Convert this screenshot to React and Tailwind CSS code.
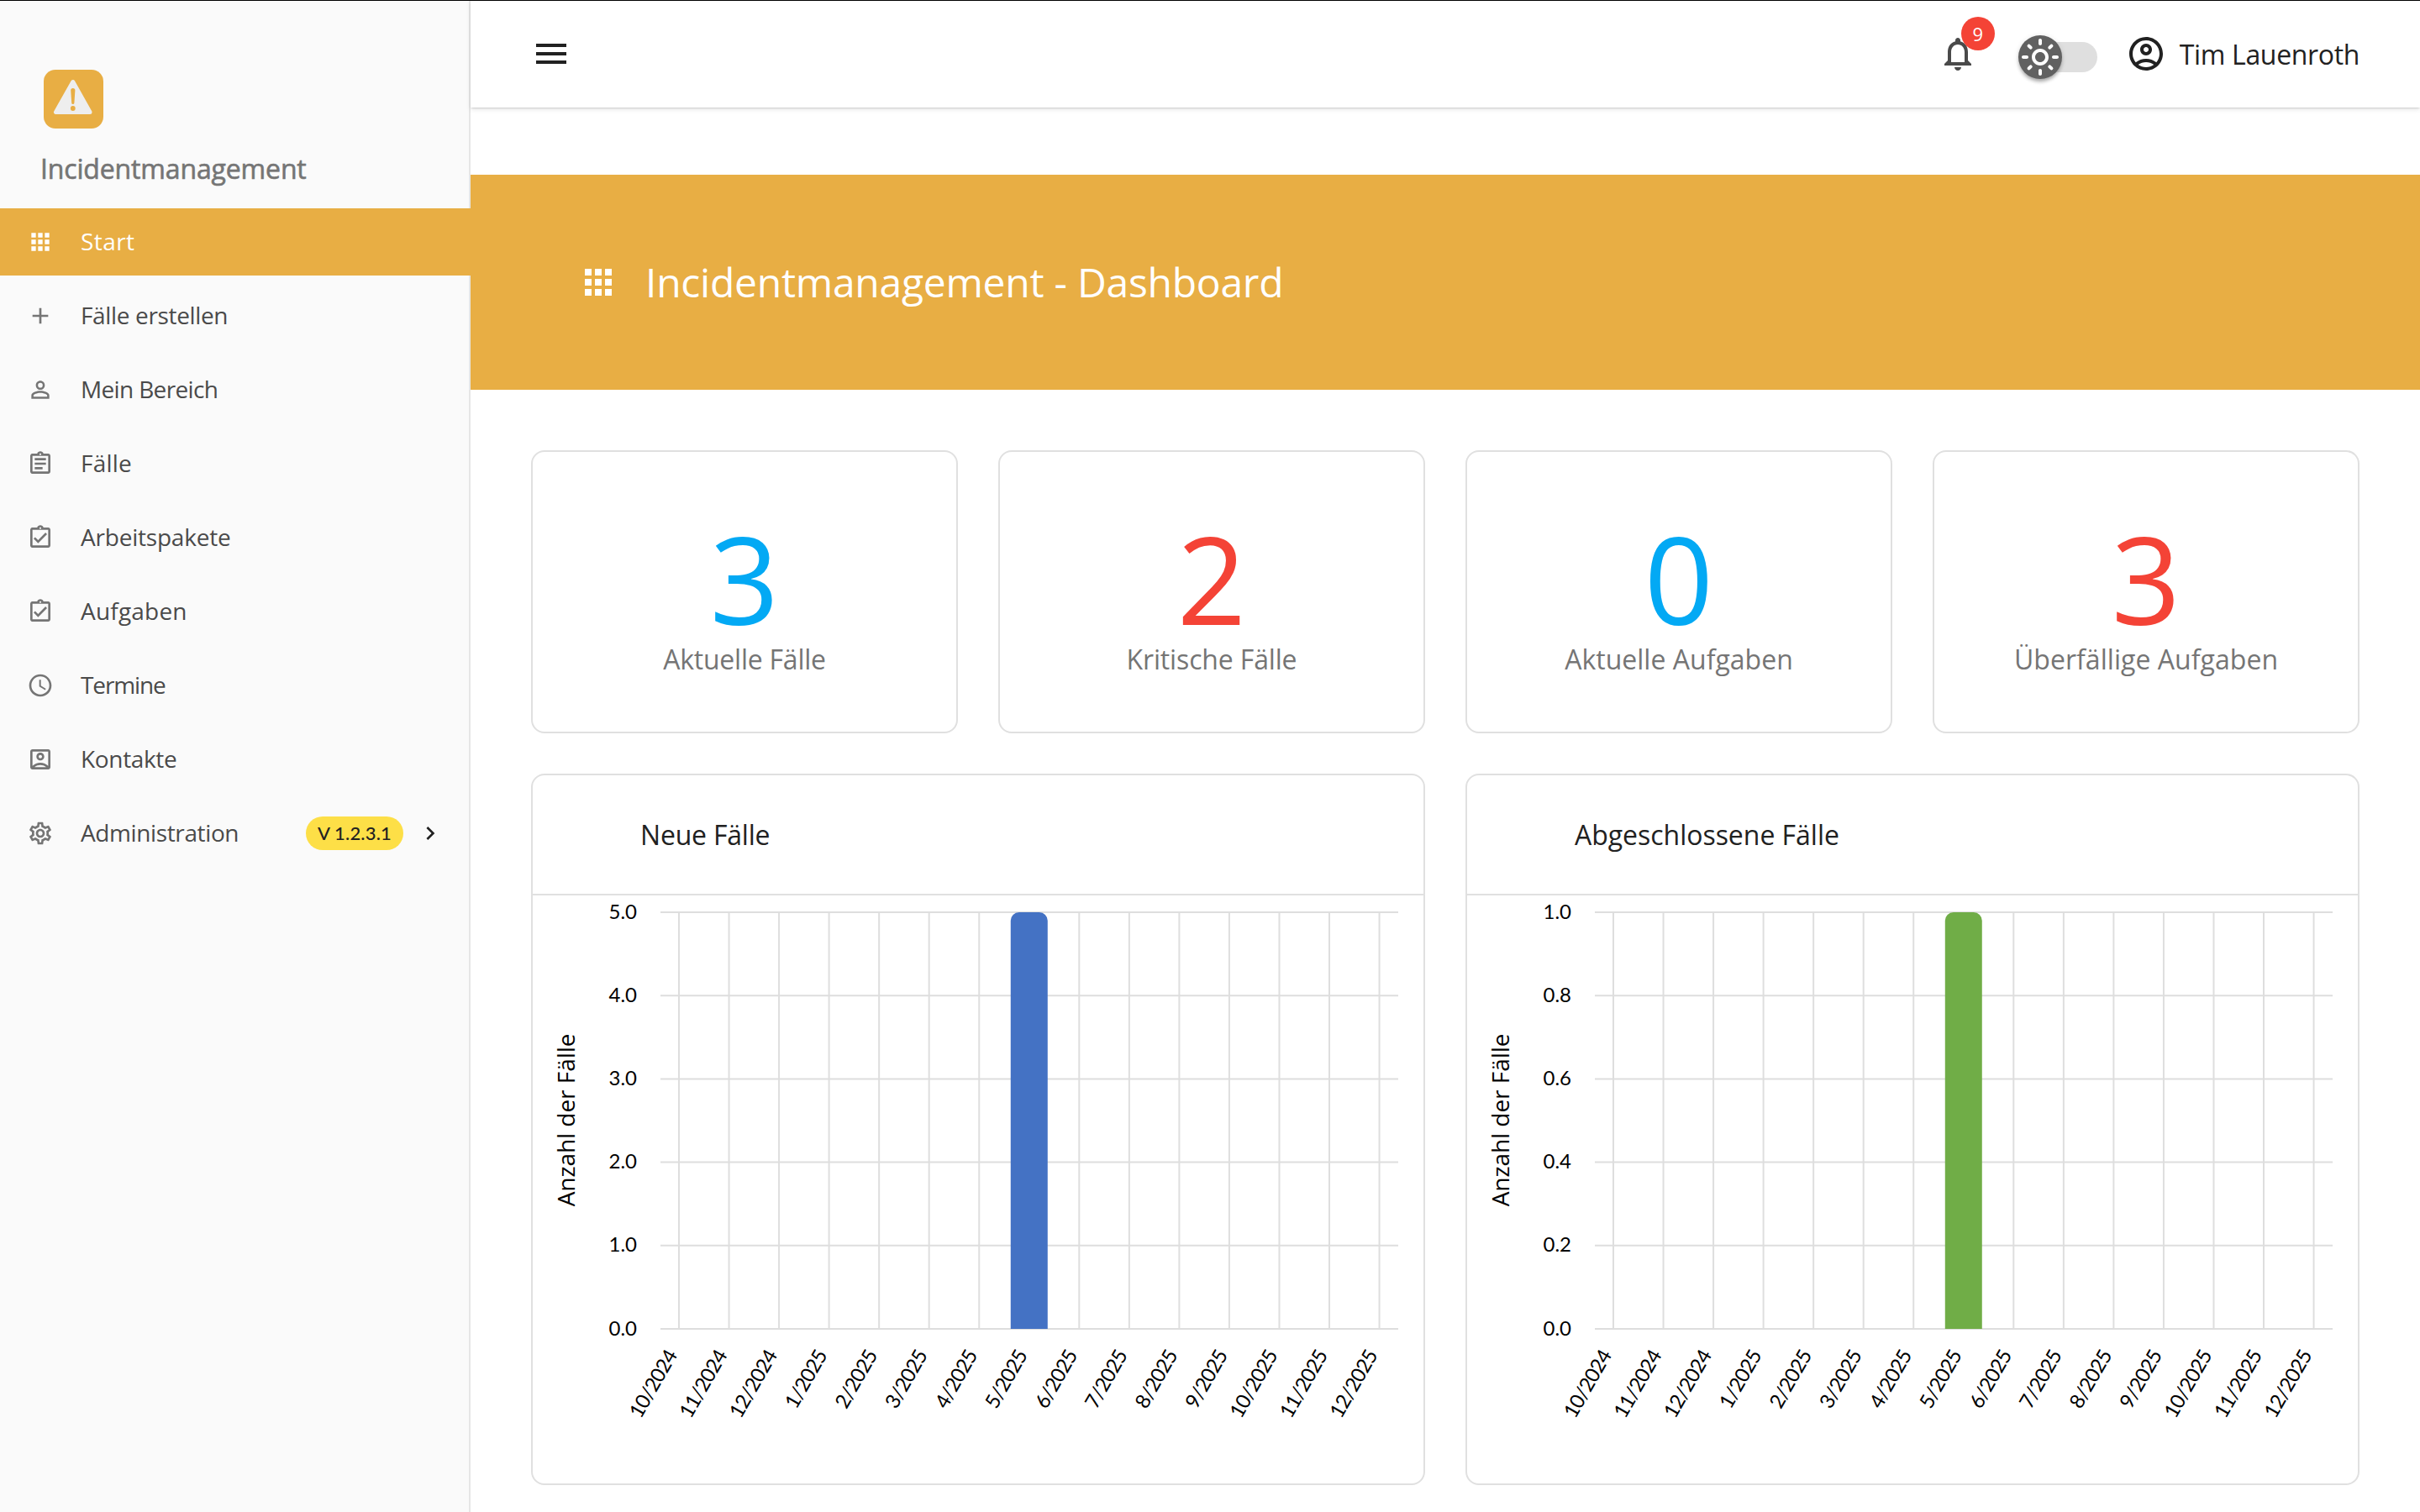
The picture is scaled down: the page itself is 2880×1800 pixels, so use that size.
import React from "react";
import {
  MdApps,
  MdAdd,
  MdPersonOutline,
  MdOutlineAssignment,
  MdOutlineAssignmentTurnedIn,
  MdAccessTime,
  MdOutlineAccountBox,
  MdOutlineSettings,
  MdChevronRight,
  MdMenu,
  MdNotificationsNone,
  MdOutlineLightMode,
  MdOutlineAccountCircle,
} from "react-icons/md";

const NAV = [
  { label: "Start", icon: MdApps, active: true, tracking: "tracking-[0.42px]" },
  { label: "Fälle erstellen", icon: MdAdd, tracking: "tracking-[-0.35px]" },
  { label: "Mein Bereich", icon: MdPersonOutline, tracking: "tracking-[-0.65px]" },
  { label: "Fälle", icon: MdOutlineAssignment, tracking: "tracking-[0.2px]" },
  { label: "Arbeitspakete", icon: MdOutlineAssignmentTurnedIn, tracking: "tracking-[-0.21px]" },
  { label: "Aufgaben", icon: MdOutlineAssignmentTurnedIn, tracking: "tracking-[0.2px]" },
  { label: "Termine", icon: MdAccessTime, tracking: "tracking-[-1.13px]" },
  { label: "Kontakte", icon: MdOutlineAccountBox, tracking: "tracking-[-0.34px]" },
  { label: "Administration", icon: MdOutlineSettings, version: "V 1.2.3.1", tracking: "tracking-[-0.38px]" },
];

const STATS = [
  { value: "3", label: "Aktuelle Fälle", color: "text-[#03a9f4]", tracking: "tracking-[-0.23px]" },
  { value: "2", label: "Kritische Fälle", color: "text-[#f44336]", tracking: "tracking-[-0.15px]" },
  { value: "0", label: "Aktuelle Aufgaben", color: "text-[#03a9f4]", tracking: "tracking-[0.01px]" },
  { value: "3", label: "Überfällige Aufgaben", color: "text-[#f44336]", tracking: "tracking-[0.04px]" },
];

const MONTHS = [
  "10/2024", "11/2024", "12/2024", "1/2025", "2/2025", "3/2025", "4/2025", "5/2025",
  "6/2025", "7/2025", "8/2025", "9/2025", "10/2025", "11/2025", "12/2025",
];

const CHARTS = [
  { title: "Neue Fälle", tracking: "tracking-[-0.2px]", ticks: ["5.0", "4.0", "3.0", "2.0", "1.0", "0.0"], color: "#4472c4" },
  { title: "Abgeschlossene Fälle", tracking: "tracking-[-0.03px]", ticks: ["1.0", "0.8", "0.6", "0.4", "0.2", "0.0"], color: "#70ad47" },
];

function Logo() {
  return (
    <svg className="h-[70px] w-[71px]" viewBox="0 0 71 70">
      <rect width="71" height="70" rx="14" fill="#e8ae44" />
      <path d="M34.8 14.5 L14.5 50.5 H55 Z" fill="#eee" stroke="#eee" strokeWidth="5" strokeLinejoin="round" />
      <path d="M32.2 24.5 a2.6 2.6 0 0 1 5.2 0 L36.4 39.5 a1.6 1.6 0 0 1 -3.2 0 Z" fill="#e8ae44" />
      <circle cx="34.8" cy="46" r="2.9" fill="#e8ae44" />
    </svg>
  );
}

function NavItem({ item }) {
  const Icon = item.icon;
  return (
    <li
      className={`flex h-20 items-center pl-8 pr-[30px] ${
        item.active ? "-mr-0.5 bg-[#e8ae44] text-white" : "text-[#4a4a4a]"
      }`}
    >
      <Icon className={`size-8 shrink-0 ${item.active ? "text-white" : "text-[#757575]"}`} />
      <span className={`ml-8 pb-[3px] text-[28px] leading-8 whitespace-nowrap ${item.tracking}`}>{item.label}</span>
      {item.version && (
        <>
          <span className="ml-auto flex h-10 w-[116px] items-center justify-center rounded-full bg-[#fddf47] pb-0.5 font-['Lato',sans-serif] text-[22px] font-medium tracking-[0.2px] whitespace-nowrap text-[#212121]">
            {item.version}
          </span>
          <MdChevronRight className="ml-4 size-8 text-[#212121]" />
        </>
      )}
    </li>
  );
}

function Sidebar() {
  return (
    <aside className="flex w-[560px] shrink-0 flex-col border-r-2 border-[#e6e6e6] bg-[#fafafa]">
      <div className="h-[247px] pt-[82px] pl-[52px]">
        <Logo />
        <h2 className="mt-7 -ml-1 text-[32px] leading-10 font-medium tracking-[-0.15px] whitespace-nowrap text-[#757575] [-webkit-text-stroke:0.6px_#757575]">
          Incidentmanagement
        </h2>
      </div>
      <ul className="flex flex-col gap-2">
        {NAV.map((item) => (
          <NavItem key={item.label} item={item} />
        ))}
      </ul>
    </aside>
  );
}

function Header() {
  return (
    <header className="flex h-[127px] shrink-0 items-center pr-[72px] pb-px pl-[72px] shadow-[0_2px_2px_-1px_rgba(0,0,0,0.14),0_2px_6px_0_rgba(0,0,0,0.1)]">
      <MdMenu className="size-12 text-[#212121]" />
      <div className="ml-auto flex items-center">
        <div className="relative">
          <MdNotificationsNone className="size-12 text-[#4a4a4a]" />
          <span className="absolute -top-5 left-7 flex size-10 items-center justify-center rounded-full bg-[#f44336] text-[22px] leading-none text-white">
            9
          </span>
        </div>
        <div className="relative ml-[58px] h-9 w-[84px] translate-y-1 rounded-full bg-[#dfdfdf]">
          <span className="absolute -top-2 -left-2.5 flex size-[52px] items-center justify-center rounded-full bg-[#616161] shadow-[0_4px_4px_-1px_rgba(0,0,0,0.3),0_1px_6px_0_rgba(0,0,0,0.12)]">
            <MdOutlineLightMode className="size-12 text-white" />
          </span>
        </div>
        <MdOutlineAccountCircle className="ml-[34px] size-12 text-[#212121]" />
        <span className="ml-4 pt-px text-[32px] leading-10 tracking-[-0.35px] whitespace-nowrap text-[#212121]">Tim Lauenroth</span>
      </div>
    </header>
  );
}

function StatCard({ stat }) {
  return (
    <div className="flex h-[337px] flex-col items-center rounded-2xl border-2 border-[#e0e0e0] pt-[94px]">
      <div className={`text-[144px] leading-[112px] ${stat.color}`}>{stat.value}</div>
      <div className={`mt-[21px] text-[32px] leading-10 whitespace-nowrap text-[#757575] ${stat.tracking}`}>{stat.label}</div>
    </div>
  );
}

const LEFT = 152;
const RIGHT = 1030;
const TOP = 20;
const BOTTOM = 516;
const FIRST = 174;
const STEP = 59.54;

function BarChart({ ticks, color }) {
  const barX = FIRST + 7 * STEP;
  return (
    <svg className="block h-[700px] w-[1060px]" viewBox="0 0 1060 700" fontFamily="Lato, sans-serif">
      {MONTHS.map((m, i) => (
        <line key={m} x1={FIRST + i * STEP} x2={FIRST + i * STEP} y1={TOP} y2={BOTTOM} stroke="#dedede" strokeWidth="2" />
      ))}
      {ticks.map((t, i) => {
        const y = TOP + (i * (BOTTOM - TOP)) / 5;
        return (
          <g key={t}>
            <line x1={LEFT} x2={RIGHT} y1={y} y2={y} stroke="#dedede" strokeWidth="2" />
            <text x="124" y={y + 7.5} fontSize="24" textAnchor="end" fill="#000">{t}</text>
          </g>
        );
      })}
      <path
        d={`M${barX - 22} ${BOTTOM} V${TOP + 10} a10 10 0 0 1 10 -10 h24 a10 10 0 0 1 10 10 V${BOTTOM} Z`}
        fill={color}
      />
      {MONTHS.map((m, i) => (
        <text
          key={m}
          transform={`translate(${FIRST + i * STEP - 1.5} 547.5) rotate(-60)`}
          fontSize="24"
          letterSpacing="-0.9"
          textAnchor="end"
          fill="#000"
        >
          {m}
        </text>
      ))}
      <text
        transform="translate(50 267.5) rotate(-90)"
        fontFamily="Open Sans, sans-serif"
        fontSize="28"
        letterSpacing="-0.05"
        textAnchor="middle"
        fill="#000"
      >
        Anzahl der Fälle
      </text>
    </svg>
  );
}

function ChartCard({ chart }) {
  return (
    <div className="h-[847px] rounded-2xl border-2 border-[#e0e0e0]">
      <div className="flex h-[143px] items-center border-b-2 border-[#e0e0e0] pl-32">
        <h3 className={`text-[32px] leading-10 whitespace-nowrap text-[#212121] ${chart.tracking}`}>{chart.title}</h3>
      </div>
      <BarChart ticks={chart.ticks} color={chart.color} />
    </div>
  );
}

export default function App() {
  return (
    <div className="flex h-[1800px] w-[2880px] overflow-hidden border-t border-black bg-white font-['Open_Sans',sans-serif]">
      <Sidebar />
      <div className="flex min-w-0 flex-1 flex-col">
        <Header />
        <section className="mt-20 flex h-64 shrink-0 items-center bg-[#e8ae44] pl-32 text-white">
          <MdApps className="size-12" />
          <h1 className="ml-8 pb-px text-[48px] leading-[60px] tracking-[-0.26px] whitespace-nowrap">Incidentmanagement - Dashboard</h1>
        </section>
        <main className="flex flex-col gap-12 px-[72px] pt-[72px]">
          <div className="grid grid-cols-4 gap-12">
            {STATS.map((s) => (
              <StatCard key={s.label} stat={s} />
            ))}
          </div>
          <div className="grid grid-cols-2 gap-12">
            {CHARTS.map((c) => (
              <ChartCard key={c.title} chart={c} />
            ))}
          </div>
        </main>
      </div>
    </div>
  );
}
